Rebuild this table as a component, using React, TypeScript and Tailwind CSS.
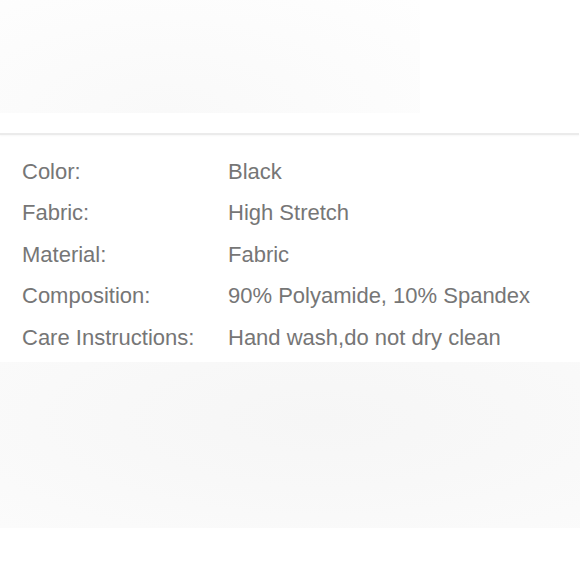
import React from 'react';

const specs = [
  { label: 'Color:', value: 'Black' },
  { label: 'Fabric:', value: 'High Stretch' },
  { label: 'Material:', value: 'Fabric' },
  { label: 'Composition:', value: '90% Polyamide, 10% Spandex' },
  { label: 'Care Instructions:', value: 'Hand wash,do not dry clean' },
];

export default function App() {
  return (
    <div className="w-[580px] h-[580px] bg-white overflow-hidden font-['Liberation_Sans',Arial,sans-serif]">

      {/* faded image above */}
      <div className="h-[113px] w-[420px] bg-[radial-gradient(ellipse_at_40%_100%,#f9f9f9,#fcfcfc_60%,#fefefe)]" />

      {/* divider */}
      <div className="mt-[20px] h-[2px] w-[579px] bg-[#ebebeb] shadow-[0_1px_2px_rgba(0,0,0,0.04)]" />

      {/* Spec table */}
      <div className="pt-[16px] pb-[3px]">
        {specs.map((s) => (
          <div
            key={s.label}
            className="flex items-center h-[41.5px] text-[22px] leading-none text-[#767676]"
          >
            <span className="w-[228px] pl-[22px] shrink-0">{s.label}</span>
            <span>{s.value}</span>
          </div>
        ))}
      </div>

      {/* faded image below */}
      <div className="h-[166px] w-full bg-[radial-gradient(ellipse_at_55%_35%,#f6f6f6,#f8f8f8_45%,#fbfbfb)]" />
    </div>
  );
}
